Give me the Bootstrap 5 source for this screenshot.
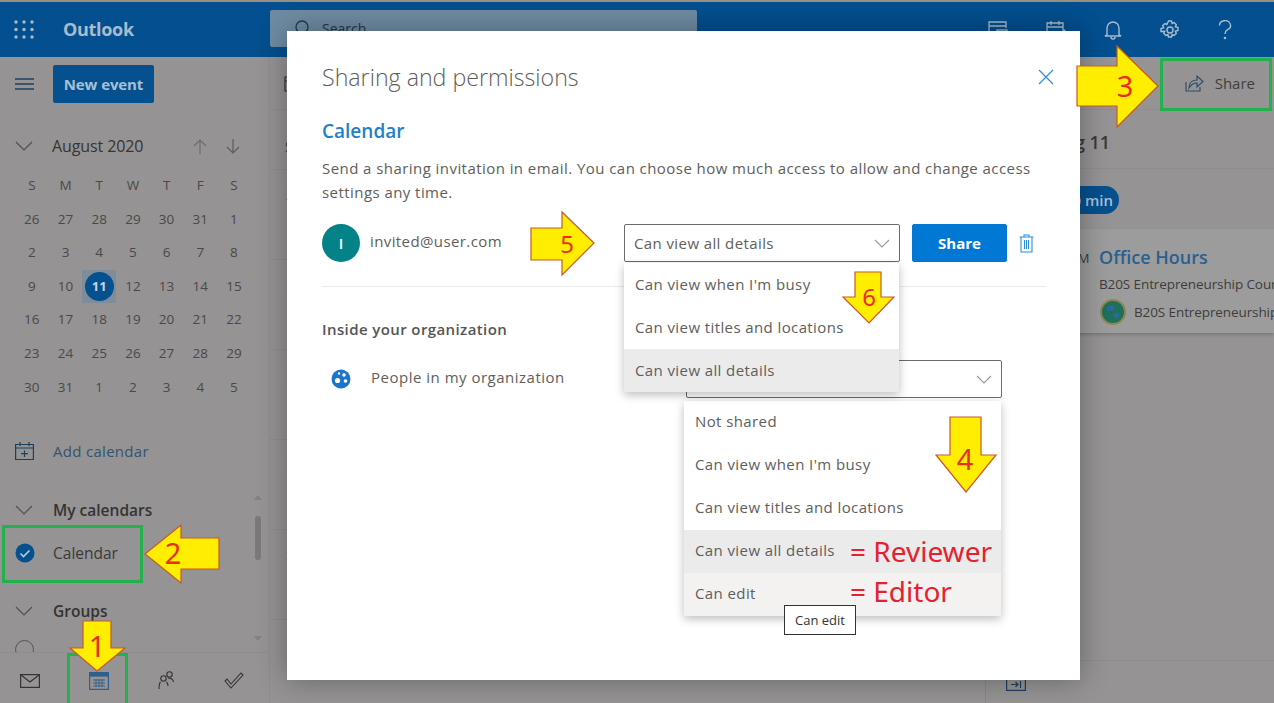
<!DOCTYPE html>
<html lang="en">
<head>
  <meta charset="UTF-8" />
  <meta name="viewport" content="width=device-width, initial-scale=1.0" />
  <title>Sharing and permissions</title>
  <link href="https://cdn.jsdelivr.net/npm/bootstrap@5.3.3/dist/css/bootstrap.min.css" rel="stylesheet" />
  <style>
    html, body { height: 703px; overflow: hidden; }
    body {
      font-family: "Open Sans", "Liberation Sans", sans-serif;
      font-size: 14px;
      background-color: #959393;
      color: #3b3a39;
    }
    svg { display: block; flex: none; }
    .app-wrap { position: relative; width: 1274px; height: 703px; overflow: hidden; }

    /* header */
    .top-bar { height: 57px; background-color: #034f8f; border-top: 2px solid #9a8f84; color: #a9bccb; }
    .waffle { margin-left: 14px; width: 20px; }
    .brand { margin-left: 29px; width: 207px; font-size: 18px; font-weight: 700; letter-spacing: -.3px; }
    .search-box { width: 427px; height: 37px; background-color: #6f8ba3; border-radius: 2px; color: #22384a; padding-left: 22px; gap: 13px; margin-top: -3px; }
    .top-icons { margin-left: 291px; gap: 38px; }

    /* sidebar */
    .side-col { width: 270px; height: 646px; border-right: 1px solid #8e8d8d; }
    .side-scroll { flex: 1; padding-left: 15px; overflow: hidden; position: relative; }
    .burger-row { height: 46px; margin-top: 4px; gap: 19px; }
    .new-btn { width: 101px; height: 38px; background-color: #05508e; color: #a8c0d6; font-weight: 700; font-size: 15px; border-radius: 2px; letter-spacing: -.1px; }
    .month-row { height: 30px; margin-top: 24px; font-size: 16px; font-weight: 500; color: #363534; }
    .month-name { margin-left: 19px; width: 141px; letter-spacing: -.1px; }
    .arrow-down { margin-left: 19px; }
    .cal-grid { display: grid; grid-template-columns: repeat(7, 33.7px); grid-auto-rows: 33.6px; margin-top: 8px; font-size: 13.5px; color: #4a4948; text-align: center; line-height: 33.6px; }
    .cal-today { background-color: #7f8d9a; }
    .cal-today span { display: inline-block; width: 29px; height: 29px; line-height: 29px; border-radius: 50%; background-color: #05508e; color: #c4d4e2; font-weight: 700; font-size: 13px; }
    .side-link { margin-top: 35px; height: 24px; gap: 19px; color: #33556f; font-size: 15px; letter-spacing: .3px; }
    .side-head { height: 24px; gap: 20px; font-weight: 600; font-size: 15.5px; color: #353433; }
    .side-item { height: 24px; gap: 18px; font-size: 15.5px; color: #3b3a39; }
    .ring { width: 19px; height: 19px; border: 1.5px solid #555; border-radius: 50%; }
    .scroll-thumb { position: absolute; left: 255px; top: 459px; width: 6px; height: 44px; border-radius: 3px; background-color: #7b7a7a; }
    .scroll-up, .scroll-down { position: absolute; left: 254px; width: 0; height: 0; border-left: 4.5px solid transparent; border-right: 4.5px solid transparent; }
    .scroll-up { top: 438px; border-bottom: 5px solid #848383; }
    .scroll-down { top: 579px; border-top: 5px solid #848383; }
    .bottom-tabs { height: 51px; border-top: 1px solid #8e8d8d; background-color: #959393; padding: 5px 25px 0 20px; }

    /* main */
    .content-col { flex: 1; min-width: 0; }
    .tool-row { height: 53px; border-bottom: 1px solid #8e8d8d; }
    .share-link { margin-left: auto; margin-right: 19px; gap: 11px; font-size: 15px; color: #403f3e; }
    .hour-col { width: 716px; flex: none; border-right: 1px solid #8a8989; }
    .day-head { height: 60px; border-bottom: 1px solid #8e8d8d; padding: 26px 0 0 15px; }
    .hour-row { height: 90px; border-bottom: 1px solid #8e8d8d; padding: 18px 0 0 16px; line-height: 1; color: #222; }
    .agenda-col { flex: 1; min-width: 0; overflow: hidden; }
    .agenda-head { height: 59px; border-bottom: 1px solid #8e8d8d; padding: 19px 0 0 24px; font-size: 18px; font-weight: 600; color: #3a3938; }
    .pill-row { height: 60px; padding: 17px 0 0 23px; }
    .pill-tag { width: 110px; height: 28px; line-height: 28px; border-radius: 14px; background-color: #05508e; color: #a9c2d8; font-size: 15px; font-weight: 600; text-align: right; padding-right: 6px; }
    .event-card { height: 104px; background-color: #9d9c9c; box-shadow: 0 2px 3px rgba(0,0,0,.18); padding: 14px 0 0 113px; white-space: nowrap; position: relative; }
    .event-time { position: absolute; left: 84px; top: 20px; font-size: 13px; }
    .event-name { font-size: 18px; font-weight: 600; color: #2a5f8f; line-height: 28px; }
    .event-sub { font-size: 13.5px; color: #3d3c3b; line-height: 26px; letter-spacing: -.1px; }
    .event-org { gap: 8px; font-size: 13.5px; color: #3d3c3b; margin-top: 2px; margin-left: 1px; letter-spacing: -.1px; }
    .agenda-foot { margin-top: auto; height: 43px; border-top: 1px solid #8e8d8d; padding: 17px 0 0 20px; }

    /* dialog */
    .share-dialog { position: absolute; left: 287px; top: 31px; width: 793px; height: 649px; background-color: #fff; box-shadow: 0 0 28px rgba(0,0,0,.32); padding: 30px 34px 0 35px; color: #605e5c; }
    .dlg-title { font-size: 23.2px; font-weight: 300; line-height: 32px; color: #605e5c; margin: 0; }
    .dlg-close { position: absolute; right: 26px; top: 38px; background: none; border: 0; padding: 0; }
    .dlg-cal { font-size: 19px; font-weight: 600; line-height: 26px; color: #1f7fc8; margin: 25px 0 0; }
    .dlg-text { font-size: 15px; letter-spacing: .44px; line-height: 24px; margin: 12px 0 0; }
    .invite-row { margin-top: 20px; padding-bottom: 24px; border-bottom: 1px solid #edebe9; position: relative; }
    .person-dot { width: 38px; height: 38px; border-radius: 50%; background-color: #038387; color: #fff; font-weight: 600; font-size: 15px; }
    .person-mail { margin-left: 10px; width: 254px; font-size: 15px; letter-spacing: .4px; margin-top: -3px; }
    .perm-box { height: 38px; border: 1px solid #6b6b6b; border-radius: 2px; background-color: #fff; padding: 0 9px; font-size: 15px; letter-spacing: .4px; justify-content: space-between; }
    .perm-a { width: 276px; }
    .perm-b { width: 316px; }
    .send-btn { width: 95px; height: 38px; margin-left: 12px; background-color: #0078d4; border-color: #0078d4; border-radius: 2px; font-size: 15px; font-weight: 700; padding: 0; }
    .trash-icon { margin-left: 12px; }
    .org-title { font-size: 15px; letter-spacing: .4px; font-weight: 600; line-height: 22px; margin: 31px 0 0; color: #555; }
    .org-row { margin-top: 20px; position: relative; }
    .org-name { margin-left: 19px; width: 315px; font-size: 15px; letter-spacing: .5px; margin-top: -3px; }
    .perm-menu { padding: 0; margin: 0; border: 0; border-radius: 0; min-width: 0; box-shadow: 0 3px 9px rgba(0,0,0,.26); font-size: 15px; letter-spacing: .4px; }
    .perm-menu .dropdown-item { height: 43px; padding: 0 11px; color: #605e5c; position: relative; }
    .menu-one { left: 302px; top: 39px; width: 275px; z-index: 3; line-height: 42px; }
    .menu-two { left: 362px; top: 41px; width: 317px; z-index: 2; line-height: 41px; }
    .perm-menu .item-sel { background-color: #ebebeb; }
    .perm-menu .item-hover { background-color: #f3f2f1; }
    .role-note { position: absolute; left: 166px; line-height: 43px; font-family: "Noto Sans", "Liberation Sans", sans-serif; font-size: 28px; letter-spacing: 0; color: #e4212f; }
    .note-up { top: 0; }
    .note-low { top: -3px; }
    .edit-tip { position: absolute; left: 100px; bottom: -19px; width: 72px; height: 30px; line-height: 28px; text-align: center; background-color: #fff; border: 1px solid #333; font-size: 13px; letter-spacing: 0; color: #333; z-index: 4; }

    /* annotations lying over the screenshot */
    .note-layer { position: absolute; left: 0; top: 0; z-index: 10; pointer-events: none; }
    .note-layer polygon { fill: #ffee00; stroke: #c9582a; stroke-width: 1.2; }
    .note-layer rect { fill: none; stroke: #22b14c; stroke-width: 3; }
    .note-layer text { font-family: "Noto Sans", "Liberation Sans", sans-serif; font-size: 29px; fill: #e5301c; text-anchor: middle; }
  </style>
</head>
<body>
  <div class="app-wrap d-flex flex-column">

    <header class="top-bar d-flex align-items-center">
      <svg class="waffle" width="20" height="19" viewBox="0 0 20 19" fill="#a9bccb">
        <circle cx="2" cy="2" r="1.7"/><circle cx="10" cy="2" r="1.7"/><circle cx="18" cy="2" r="1.7"/>
        <circle cx="2" cy="9.5" r="1.7"/><circle cx="10" cy="9.5" r="1.7"/><circle cx="18" cy="9.5" r="1.7"/>
        <circle cx="2" cy="17" r="1.7"/><circle cx="10" cy="17" r="1.7"/><circle cx="18" cy="17" r="1.7"/>
      </svg>
      <div class="brand">Outlook</div>
      <div class="search-box d-flex align-items-center">
        <svg width="17" height="17" viewBox="0 0 17 17" fill="none" stroke="#22384a" stroke-width="1.3"><circle cx="10" cy="7" r="6"/><path d="M5.5 11.5 1 16"/></svg>
        <span>Search</span>
      </div>
      <div class="top-icons d-flex align-items-center">
        <svg width="20" height="20" viewBox="0 0 20 20" fill="none" stroke="#a9bccb" stroke-width="1.3"><path d="M7 17H1V2h17v6M1 6h17"/><rect x="9" y="10" width="10" height="8"/></svg>
        <svg width="20" height="20" viewBox="0 0 20 20" fill="none" stroke="#a9bccb" stroke-width="1.3"><path d="M10 17H1V3h16v7M1 7h16M5 1v4M13 1v4"/><path d="m12 18 1-3 5-5 2 2-5 5z"/></svg>
        <svg width="18" height="20" viewBox="0 0 18 20" fill="none" stroke="#a9bccb" stroke-width="1.4"><path d="M3 15V8a6 6 0 0 1 12 0v7l2 1H1zM7 17a2 2 0 0 0 4 0"/></svg>
        <svg width="20" height="20" viewBox="0 0 20 20" fill="none" stroke="#a9bccb" stroke-width="1.4"><circle cx="10" cy="10" r="3"/><path d="m8.5 1 3 0 .6 2.5 2-.9 2.2 2.1-1 2 2.7.8v3l-2.7.8 1 2-2.2 2.1-2-.9-.6 2.5h-3l-.6-2.5-2 .9-2.2-2.1 1-2L1 11.5v-3l2.7-.8-1-2 2.2-2.1 2 .9z"/></svg>
        <svg width="14" height="20" viewBox="0 0 14 20" fill="none" stroke="#a9bccb" stroke-width="1.4"><path d="M1.5 5.5a5.5 4.8 0 1 1 8 4.2C7.800 10.700 7 11.800 7 14"/><circle cx="7" cy="18" r=".6"/></svg>
      </div>
    </header>

    <div class="d-flex flex-grow-1">
      <aside class="side-col d-flex flex-column">
        <div class="side-scroll">
          <div class="burger-row d-flex align-items-center">
            <svg width="19" height="12" viewBox="0 0 19 12" stroke="#1f3f5c" stroke-width="1.3"><path d="M0 1h19M0 6h19M0 11h19"/></svg>
            <button type="button" class="new-btn btn p-0">New event</button>
          </div>
          <div class="month-row d-flex align-items-center">
            <svg width="18" height="10" viewBox="0 0 18 10" fill="none" stroke="#504f4e" stroke-width="1.2"><path d="m1 1 8 8 8-8"/></svg>
            <span class="month-name">August 2020</span>
            <svg width="14" height="15" viewBox="0 0 14 15" fill="none" stroke="#6e6d6d" stroke-width="1.2"><path d="M7 15V1M1 7l6-6 6 6"/></svg>
            <svg class="arrow-down" width="14" height="15" viewBox="0 0 14 15" fill="none" stroke="#5d5c5c" stroke-width="1.2"><path d="M7 0v14M1 8l6 6 6-6"/></svg>
          </div>
          <div class="cal-grid">
            <div>S</div><div>M</div><div>T</div><div>W</div><div>T</div><div>F</div><div>S</div>
            <div>26</div><div>27</div><div>28</div><div>29</div><div>30</div><div>31</div><div>1</div>
            <div>2</div><div>3</div><div>4</div><div>5</div><div>6</div><div>7</div><div>8</div>
            <div>9</div><div>10</div><div class="cal-today"><span>11</span></div><div>12</div><div>13</div><div>14</div><div>15</div>
            <div>16</div><div>17</div><div>18</div><div>19</div><div>20</div><div>21</div><div>22</div>
            <div>23</div><div>24</div><div>25</div><div>26</div><div>27</div><div>28</div><div>29</div>
            <div>30</div><div>31</div><div>1</div><div>2</div><div>3</div><div>4</div><div>5</div>
          </div>
          <div class="side-link d-flex align-items-center">
            <svg width="19" height="18" viewBox="0 0 19 18" fill="none" stroke="#1f3f5c" stroke-width="1.2"><path d="M.6 2.500h17.800v15H.6zM.6 6h17.800M5 0v4M14 0v4M9.500 8.500v6.500M6 11.700h7"/></svg>
            <span>Add calendar</span>
          </div>
          <div class="side-head d-flex align-items-center" style="margin-top:35px">
            <svg width="18" height="10" viewBox="0 0 18 10" fill="none" stroke="#504f4e" stroke-width="1.2"><path d="m1 1 8 8 8-8"/></svg>
            <span>My calendars</span>
          </div>
          <div class="side-item d-flex align-items-center" style="margin-top:19px">
            <svg width="20" height="20" viewBox="0 0 20 20"><circle cx="10" cy="10" r="9.500" fill="#05508e"/><path d="m5.500 10.500 3 3 6-6" fill="none" stroke="#b8cbdc" stroke-width="1.6"/></svg>
            <span>Calendar</span>
          </div>
          <div class="side-head d-flex align-items-center" style="margin-top:34px">
            <svg width="18" height="10" viewBox="0 0 18 10" fill="none" stroke="#504f4e" stroke-width="1.2"><path d="m1 1 8 8 8-8"/></svg>
            <span>Groups</span>
          </div>
          <div class="ring" style="margin-top:17px"></div>
          <div class="scroll-up"></div>
          <div class="scroll-thumb"></div>
          <div class="scroll-down"></div>
        </div>
        <nav class="bottom-tabs d-flex align-items-center justify-content-between">
          <svg width="20" height="14" viewBox="0 0 20 14" fill="none" stroke="#333" stroke-width="1.200"><rect x=".6" y=".6" width="18.800" height="12.800"/><path d="m1 1 9 7 9-7"/></svg>
          <svg width="20" height="18" viewBox="0 0 20 18"><rect x=".6" y=".6" width="18.800" height="16.800" fill="none" stroke="#2f5f8c" stroke-width="1.200"/><rect x=".6" y=".6" width="18.800" height="4" fill="#2f5f8c"/><path d="M4 8h12M4 11h12M4 14h12M7 7v8M10 7v8M13 7v8" stroke="#2f5f8c" stroke-width=".9"/></svg>
          <svg width="18" height="19" viewBox="0 0 18 19" fill="none" stroke="#333" stroke-width="1.100"><circle cx="12.500" cy="3.500" r="2.700"/><circle cx="6.500" cy="7.500" r="2.700"/><path d="M2 18c0-3 .5-6 1.500-7M9.500 11c1 1 1.500 3 1.500 4M11 7c3 0 5 1 5.500 4"/></svg>
          <svg width="20" height="17" viewBox="0 0 20 17" fill="none" stroke="#333" stroke-width="1.100"><path d="m1 9 6 7L19 3l-2-2L7 12 3 7z"/></svg>
        </nav>
      </aside>

      <main class="content-col d-flex flex-column">
        <div class="tool-row d-flex align-items-center">
          <svg class="ms-2 ps-1" width="22" height="18" viewBox="0 0 14 18" fill="none" stroke="#333" stroke-width="1.200"><path d="M1 3h16v14H1zM1 7h16"/></svg>
          <div class="share-link d-flex align-items-center">
            <svg width="19" height="17" viewBox="0 0 19 17" fill="none" stroke="#2f4f6c" stroke-width="1.200"><path d="M1 7v9h14v-4M4 13c0-5 3-8 8-8V1l6 5.500-6 5.500V8c-3 0-6 1.500-8 5z"/></svg>
            <span>Share</span>
          </div>
        </div>
        <div class="d-flex flex-grow-1">
          <div class="hour-col">
            <div class="day-head">S</div>
            <div class="hour-row">2</div>
            <div class="hour-row">:</div>
            <div class="hour-row">:</div>
            <div class="hour-row">:</div>
            <div class="hour-row">:</div>
          </div>
          <div class="agenda-col d-flex flex-column">
            <div class="agenda-head">Tue, Aug 11</div>
            <div class="pill-row"><div class="pill-tag">In 30 min</div></div>
            <div class="event-card">
              <span class="event-time">PM</span>
              <div class="event-name">Office Hours</div>
              <div class="event-sub">B20S Entrepreneurship Course</div>
              <div class="event-org d-flex align-items-center">
                <svg width="26" height="26" viewBox="0 0 26 26"><circle cx="13" cy="13" r="12" fill="#1f6f5a" stroke="#8f8650" stroke-width="2"/><path d="M7 9c3-4 6-3 7-1s-2 4-4 4-3 1-3-3zM15 14c3-1 5 0 4 3s-4 3-5 1 0-3 1-4z" fill="#2b6a9e"/></svg>
                <span>B20S Entrepreneurship</span>
              </div>
            </div>
            <div class="agenda-foot">
              <svg width="20" height="13" viewBox="0 0 20 13" fill="none" stroke="#1f3f5c" stroke-width="1.200"><rect x=".6" y=".6" width="18.800" height="11.800"/><path d="M5 6.500h7M9.500 4l2.500 2.500L9.500 9M14.500 3v7"/></svg>
            </div>
          </div>
        </div>
      </main>
    </div>

    <section class="share-dialog">
      <h1 class="dlg-title">Sharing and permissions</h1>
      <button type="button" class="dlg-close" aria-label="Close">
        <svg width="16" height="16" viewBox="0 0 16 16" stroke="#2f8ad6" stroke-width="1.200"><path d="m1 1 14 14M15 1 1 15"/></svg>
      </button>
      <h2 class="dlg-cal">Calendar</h2>
      <p class="dlg-text">Send a sharing invitation in email. You can choose how much access to allow and change access settings any time.</p>

      <div class="invite-row d-flex align-items-center">
        <div class="person-dot d-flex align-items-center justify-content-center">I</div>
        <div class="person-mail">invited@user.com</div>
        <div class="perm-box perm-a d-flex align-items-center">
          <span>Can view all details</span>
          <svg width="16" height="9" viewBox="0 0 16 9" fill="none" stroke="#999" stroke-width="1.100"><path d="m1 1 7 7 7-7"/></svg>
        </div>
        <button type="button" class="send-btn btn btn-primary">Share</button>
        <svg class="trash-icon" width="15" height="19" viewBox="0 0 15 19" fill="none" stroke="#2e8fd8" stroke-width="1.100"><path d="M.5 3h14M5 3V1h5v2M2 3v15h11V3M5.500 6v9M7.500 6v9M9.500 6v9"/></svg>
        <div class="dropdown-menu show perm-menu menu-one">
          <div class="dropdown-item">Can view when I'm busy</div>
          <div class="dropdown-item">Can view titles and locations</div>
          <div class="dropdown-item item-sel">Can view all details</div>
        </div>
      </div>

      <h3 class="org-title">Inside your organization</h3>
      <div class="org-row d-flex align-items-center">
        <svg class="ms-2" width="22" height="20" viewBox="0 0 20 20"><circle cx="10" cy="10" r="9.500" fill="#1b76c9"/><circle cx="6.500" cy="11.500" r="2.600" fill="#fff"/><circle cx="13" cy="6" r="1.800" fill="#fff"/><circle cx="14.500" cy="12" r="1.800" fill="#fff"/><circle cx="8" cy="4.500" r="1.200" fill="#fff"/></svg>
        <div class="org-name">People in my organization</div>
        <div class="perm-box perm-b d-flex align-items-center justify-content-end">
          <svg width="16" height="9" viewBox="0 0 16 9" fill="none" stroke="#999" stroke-width="1.100"><path d="m1 1 7 7 7-7"/></svg>
        </div>
        <div class="dropdown-menu show perm-menu menu-two">
          <div class="dropdown-item">Not shared</div>
          <div class="dropdown-item">Can view when I'm busy</div>
          <div class="dropdown-item">Can view titles and locations</div>
          <div class="dropdown-item item-sel">Can view all details<span class="role-note note-up">= Reviewer</span></div>
          <div class="dropdown-item item-hover">Can edit<span class="role-note note-low">= Editor</span></div>
          <div class="edit-tip">Can edit</div>
        </div>
      </div>
    </section>

    <svg class="note-layer" width="1274" height="703" viewBox="0 0 1274 703">
      <rect x="1161.500" y="59.500" width="109" height="50"/>
      <rect x="3.500" y="526.500" width="138" height="55"/>
      <rect x="68.500" y="654.500" width="58" height="52"/>

      <polygon points="83,621 111,621 111,648 125,648 97,671 70,648 83,648"/>
      <text x="97" y="657">1</text>

      <polygon points="219,538 181,538 181,525 145,554 181,583 181,569 219,569"/>
      <text x="173" y="564">2</text>

      <polygon points="1077,66 1117,66 1117,46 1158,86 1117,127 1117,106 1077,106"/>
      <text x="1125" y="97">3</text>

      <polygon points="950,417 981,417 981,455 996,455 966,492 936,455 950,455"/>
      <text x="965" y="470">4</text>

      <polygon points="531,228 562,228 562,212 594,243 562,275 562,260 531,260"/>
      <text x="567" y="253" style="font-size:24px">5</text>

      <polygon points="855,272 881,272 881,297 894,297 869,323 843,297 855,297"/>
      <text x="869" y="306" style="font-size:24px">6</text>
    </svg>
  </div>

  <script src="https://cdn.jsdelivr.net/npm/bootstrap@5.3.3/dist/js/bootstrap.bundle.min.js"></script>
</body>
</html>
